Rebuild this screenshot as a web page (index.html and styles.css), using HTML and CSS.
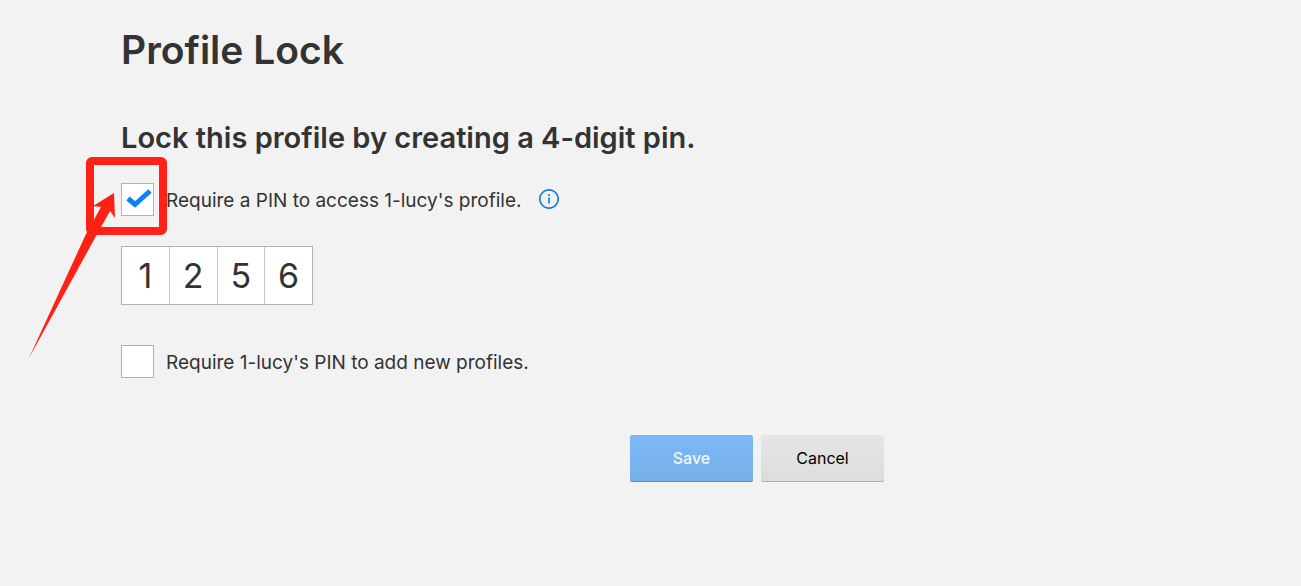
FILE: index.html
```html
<!DOCTYPE html>
<html lang="en">
  <head>
    <meta charset="utf-8"/>
    <meta name="viewport" content="width=device-width, initial-scale=1">
    <title>Profile Lock</title>
    <link rel="stylesheet" href="styles.css">
  </head>
  <body>
    <main class="profile-lock">
      <h1>Profile Lock</h1>
      <h2>Lock this profile by creating a 4-digit pin.</h2>

      <form>
        <div class="option">
          <input type="checkbox" id="require-pin" checked>
          <label for="require-pin">Require a PIN to access 1-lucy's profile.</label>
          <button type="button" class="info" aria-label="More info">
            <svg width="20" height="20" viewBox="0 0 20 20" aria-hidden="true">
              <circle cx="10" cy="10" r="9.2"/>
              <path d="M10 8.4V14.6"/>
              <path d="M10 5V7"/>
            </svg>
          </button>

          <!-- red box and arrow around the checkbox -->
          <svg class="callout" width="140" height="204" viewBox="0 0 140 204" aria-hidden="true">
            <rect x="61" y="5" width="73" height="70" rx="2"/>
            <path d="M0 202L57 78L72 51L64 50L85 37L86 62L81 55L67 80z"/>
          </svg>
        </div>

        <div class="pin">
          <input type="text" inputmode="numeric" maxlength="1" value="1" aria-label="PIN digit 1">
          <input type="text" inputmode="numeric" maxlength="1" value="2" aria-label="PIN digit 2">
          <input type="text" inputmode="numeric" maxlength="1" value="5" aria-label="PIN digit 3">
          <input type="text" inputmode="numeric" maxlength="1" value="6" aria-label="PIN digit 4">
        </div>

        <div class="option">
          <input type="checkbox" id="require-add">
          <label for="require-add">Require 1-lucy's PIN to add new profiles.</label>
        </div>

        <div class="buttons">
          <button type="submit" class="btn save">Save</button>
          <button type="button" class="btn cancel">Cancel</button>
        </div>
      </form>
    </main>
  </body>
</html>
```

FILE: styles.css
```css
* {
  box-sizing: border-box;
}
body {
  margin: 0;
  background: #f2f2f2;
  color: #333;
  font-family: Inter, Roboto, Arial, sans-serif;
}
.profile-lock {
  max-width: 884px;
  padding: 26px 0 40px 121px;
}
h1 {
  margin: 0 0 42px;
  font-size: 39px;
  line-height: 48px;
  font-weight: 600;
}
h2 {
  margin: 0 0 23px;
  font-size: 29px;
  line-height: 44px;
  font-weight: 600;
}
.option {
  position: relative;
  display: flex;
  align-items: center;
  font-size: 19px;
  line-height: 31px;
}
.option input {
  flex: none;
  appearance: none;
  width: 33px;
  height: 33px;
  margin: 0 12px 0 0;
  border: 1px solid #b2b2b2;
  background: #fff;
}
.option input:checked {
  background: #fff url("data:image/svg+xml,%3Csvg xmlns='http://www.w3.org/2000/svg' viewBox='0 0 31 31'%3E%3Cpath d='M6 14.5L13 20.5L28 7' fill='none' stroke='%230a80fb' stroke-width='5'/%3E%3C/svg%3E");
}
.option label {
  padding-top: 2px;
}
.info {
  display: flex;
  margin: 0 0 2px 18px;
  padding: 0;
  border: 0;
  background: none;
}
.info svg {
  fill: none;
  stroke: #1a7ce6;
  stroke-width: 1.7;
}
.callout {
  position: absolute;
  left: -92px;
  top: -27px;
  pointer-events: none;
}
.callout rect {
  fill: none;
  stroke: #ff2113;
  stroke-width: 8;
  stroke-linejoin: round;
}
.callout path {
  fill: #ff2113;
}
.pin {
  display: flex;
  width: 192px;
  margin: 30px 0 40px;
  border: 1px solid #b2b2b2;
  background: #fff;
}
.pin input {
  flex: 1;
  min-width: 0;
  height: 57px;
  padding: 0;
  border: 0;
  border-left: 1px solid #c8c8c8;
  background: none;
  color: #333;
  font: 34px/57px Inter, Roboto, Arial, sans-serif;
  text-align: center;
}
.pin input:first-child {
  border-left: 0;
}
.buttons {
  display: flex;
  justify-content: flex-end;
  gap: 8px;
  margin-top: 57px;
}
.btn {
  width: 123px;
  height: 47px;
  padding: 0;
  border: 0;
  border-radius: 2px;
  font: 16px/47px Inter, Roboto, Arial, sans-serif;
  box-shadow: inset 0 -1px 0 rgba(0, 0, 0, 0.2);
}
.save {
  background: linear-gradient(#7ab8f8, #78afe6);
  color: #f0f7ff;
  font-weight: 500;
}
.cancel {
  background: linear-gradient(#e6e6e6, #dcdcdc);
  color: #000;
}
```
